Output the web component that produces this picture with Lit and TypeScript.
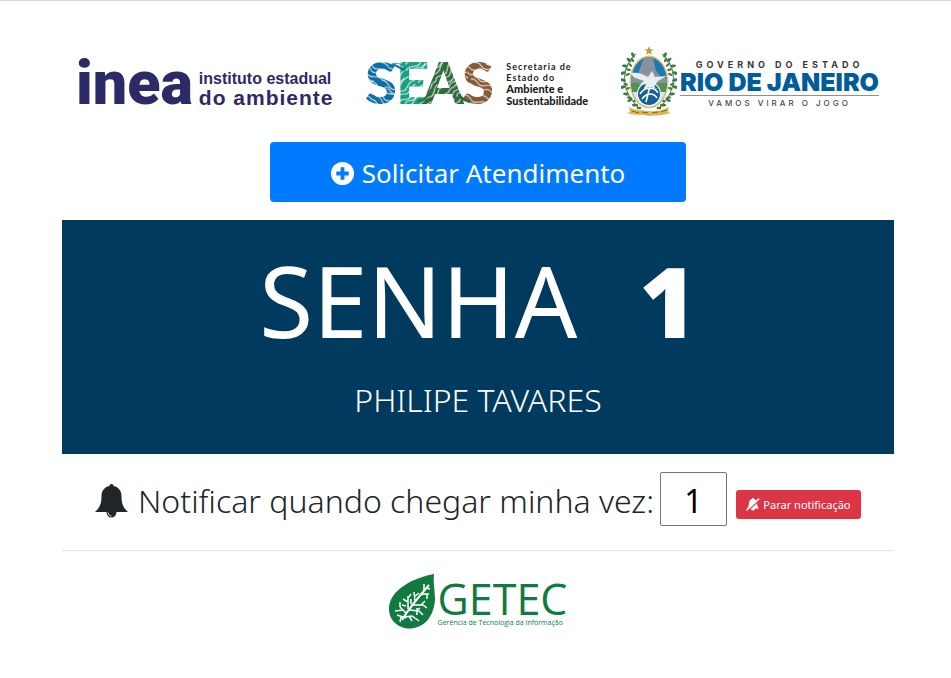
import { LitElement, html, css, svg } from "lit";
import { customElement, property, state } from "lit/decorators.js";

@customElement("inea-logo")
class IneaLogo extends LitElement {
  static styles = css`
    :host { display: flex; align-items: center; color: #2d2a68; }
    .mark { font: 900 61px/72px Roboto, sans-serif; padding-top: 4px; }
    .name { display: flex; flex-direction: column; padding: 16px 0 0 6px; font-family: "Liberation Sans", sans-serif; font-weight: 700; white-space: nowrap; }
    .small { font-size: 16px; line-height: 18px; }
    .big { font-size: 21px; line-height: 20px; letter-spacing: 1px; }
  `;
  render() {
    return html`<span class="mark">inea</span>
      <span class="name"><span class="small">instituto estadual</span><span class="big">do ambiente</span></span>`;
  }
}

@customElement("seas-logo")
class SeasLogo extends LitElement {
  static styles = css`
    :host { display: flex; align-items: center; gap: 12px; color: #1c1c1c; }
    svg { display: block; width: 128px; height: 72px; }
    .letters { font: 900 58px Lato, sans-serif; }
    .name { display: flex; flex-direction: column; padding-top: 6px; font: 700 10px/12px Lato, sans-serif; white-space: nowrap; }
    .light { font-size: 9px; line-height: 11px; letter-spacing: 1px; }
    .strong { font-weight: 900; font-size: 11px; line-height: 12px; }
  `;
  private texture(id: string, color: string, flip: number) {
    return svg`<pattern id=${id} width="26" height="22" patternUnits="userSpaceOnUse" patternTransform="rotate(${flip})">
      <rect width="26" height="22" fill=${color} />
      <g fill="none" stroke="#fff" stroke-width="1">
        <path d="M0 3C7-2 9 8 15 5S22 1 26 3" />
        <path d="M2 7C8 3 10 12 16 9S22 6 25 7" />
        <path d="M0 12C6 9 9 17 15 14S22 10 26 12" />
        <path d="M5 17C10 13 12 21 19 17" />
        <path d="M0 20C5 17 7 23 13 20S22 18 26 20" />
      </g>
    </pattern>`;
  }
  render() {
    return html`<svg viewBox="0 -12 128 72" role="img" aria-label="SEAS">
        <defs>
          ${this.texture("blue", "#0b6ea8", 30)} ${this.texture("teal", "#17a184", -35)}
          ${this.texture("green", "#2f6b3c", -50)} ${this.texture("brown", "#855a36", 20)}
        </defs>
        <g class="letters">
          <text x="-1" y="47" fill="url(#blue)">S</text>
          <text x="30" y="47" fill="url(#teal)">E</text>
          <text x="57" y="47" fill="url(#green)">A</text>
          <text x="96" y="47" fill="url(#brown)">S</text>
        </g>
        <path d="M23 10C29 5 31 11 39 13" fill="none" stroke="#0b6ea8" stroke-width="2" />
        <path d="M24 8C30 4 34 8 38 8" fill="none" stroke="#17a184" stroke-width="1" />
        <path d="M52 44C59 45 61 38 66 32" fill="none" stroke="#2f6b3c" stroke-width="2" />
        <path d="M93 37C96 44 99 42 104 45" fill="none" stroke="#2f6b3c" stroke-width="3" />
      </svg>
      <span class="name">
        <span class="light">Secretaria de</span><span class="light">Estado do</span>
        <span class="strong">Ambiente e</span><span class="strong">Sustentabilidade</span>
      </span>`;
  }
}

@customElement("rio-logo")
class RioLogo extends LitElement {
  static styles = css`
    :host { display: flex; align-items: center; gap: 3px; }
    svg { display: block; width: 56px; height: 70px; }
    .name { display: flex; flex-direction: column; align-items: center; padding-top: 9px; white-space: nowrap; font-family: Inter, sans-serif; }
    .over { font-size: 9px; line-height: 10px; font-weight: 700; letter-spacing: 4px; color: #3b3637; }
    .main { font-size: 25px; line-height: 25px; font-weight: 900; color: #005c9c; border-bottom: 1px solid #8e9196; }
    .under { font-size: 8px; line-height: 15px; font-weight: 500; letter-spacing: 3px; color: #4c4748; }
  `;
  private leaves(side: number) {
    const spots = [[-20, 14, 40], [-24, 20, 10], [-26, 27, -20], [-26, 34, 20], [-26, 41, -20], [-23, 48, 10], [-19, 54, -30], [-14, 59, 0], [-16, 9, 60]];
    return svg`<g transform="translate(28 0) scale(${side} 1)" fill="#417b43">
      <path d="M-13 8C-28 20-29 44-11 61" fill="none" stroke="#417b43" stroke-width="1" />
      ${spots.map(([x, y, a]) => svg`<g transform="translate(${x} ${y}) rotate(${a})"><ellipse rx="3" ry="1.5" /><ellipse cx="4" cy="3" rx="2.5" ry="1.2" /></g>`)}
    </g>`;
  }
  render() {
    return html`<svg viewBox="0 0 56 70" role="img" aria-label="Brasão do Rio de Janeiro">
        <defs><clipPath id="shield"><ellipse cx="28" cy="36" rx="18" ry="25" /></clipPath></defs>
        ${this.leaves(1)} ${this.leaves(-1)}
        <path d="M28 0l1.2 3.3 3.5.1-2.8 2.1 1 3.4-2.9-2-2.9 2 1-3.4-2.8-2.1 3.5-.1z" fill="#c29a43" />
        <ellipse cx="28" cy="36" rx="19.5" ry="26.5" fill="#e0c47c" />
        <g clip-path="url(#shield)">
          <path d="M8 8h40v56H8z" fill="#1c79b2" />
          <path d="M8 34L17 28 22 14 27 9 32 12 35 25 40 31 48 33V39H8z" fill="#86939c" />
          <path d="M8 37h40v11H8z" fill="#4f9653" />
          <path d="M8 46h40v16H8z" fill="#d8e4e9" />
        </g>
        <circle cx="28" cy="48" r="12" fill="#fff" />
        <circle cx="28" cy="48" r="11" fill="#176095" />
        <path d="M19 48C24 40 34 41 37 47M21 53C26 46 33 47 36 52M29 40l-4 16" fill="none" stroke="#fff" stroke-width="1.6" />
        <path d="M10 27C19 26 22 29 27 31L31 25 34 31 46 30 37 35 33 41 37 43 28 41 22 44 25 38 18 39 23 35 12 31z" fill="#e8eef0" />
        <path d="M8 61C14 65 22 64 27 65S41 65 48 61L47 66 50 67C40 70 35 69 28 70 21 68 15 70 6 67L9 66z" fill="#dfb64d" />
        <path d="M11 65l7 2M21 66l6 1M31 67l6-1M40 66l6-2" stroke="#80652a" stroke-width="1" />
      </svg>
      <span class="name"><span class="over">GOVERNO DO ESTADO</span><span class="main">RIO DE JANEIRO</span><span class="under">VAMOS VIRAR O JOGO</span></span>`;
  }
}

@customElement("getec-logo")
class GetecLogo extends LitElement {
  static styles = css`
    :host { display: flex; align-items: center; gap: 3px; color: #117a3f; font-family: "Open Sans", sans-serif; }
    svg { display: block; width: 46px; height: 55px; }
    .name { display: flex; flex-direction: column; padding-top: 2px; white-space: nowrap; }
    .main { font-size: 43px; line-height: 41px; font-weight: 400; }
    .sub { font-size: 7px; line-height: 8px; }
  `;
  render() {
    return html`<svg viewBox="0 0 46 55" role="img" aria-label="Folha">
        <path d="M45 0C27 3 0 15 0 35 0 47 10 55 22 54.500 39 53 45 38 46 26 46 16 44 9 45 0z" fill="#117a3f" />
        <g fill="none" stroke="#fff" stroke-width="1.500">
          <path d="M13 46C19 36 26 27 40 11" stroke-width="2" />
          <path d="M17 39L11 33M14 36L6 37M11 33L11 28M19 35L19 22M19 28L14 25M19 24L22 20M26 27L25 18M26 22L30 19M31 21L35 20L40 20M35 16L35 10M37 14L41 15" />
          <path d="M15 43L23 42L30 47M20 42L23 47M20 36L30 37L34 41M27 37L31 34M24 31L34 31L38 34M32 31L36 27M28 41L28 34M8 41L17 44M12 43L11 48M13 31L17 32M22 30L22 25M38 20L38 25" />
        </g>
      </svg>
      <span class="name"><span class="main">GETEC</span><span class="sub">Gerência de Tecnologia da Informação</span></span>`;
  }
}

@customElement("app-root")
class AppRoot extends LitElement {
  @property() holder = "PHILIPE TAVARES";
  @property({ type: Number }) ticket = 1;
  @state() private notifyAt = "1";

  static styles = css`
    :host { display: block; box-sizing: border-box; min-height: 100vh; border-top: 1px solid #d5d5d5; background: #fff; color: #212529; font-family: "Noto Sans", "Open Sans", sans-serif; }
    main { display: flex; flex-direction: column; padding: 44px 57px 40px 62px; }
    header { display: flex; align-items: center; justify-content: space-between; padding: 0 15px 0 14px; height: 71px; }
    button { font-family: inherit; color: #fff; border: 0; border-radius: 4px; cursor: pointer; display: flex; align-items: center; justify-content: center; }
    svg { display: block; flex: none; }
    .request { align-self: center; width: 50%; height: 60px; margin-top: 26px; padding: 2px 0 0; gap: 8px; background: #007bff; font-size: 26px; line-height: 40px; }
    .plus { width: 23px; height: 23px; }
    .panel { display: flex; flex-direction: column; align-items: center; margin-top: 18px; padding: 18px 0 30px; background: #003a5e; color: #fff; }
    .ticket { display: flex; gap: 62px; margin: 0; font-size: 98px; line-height: 124px; font-weight: 400; }
    .ticket strong { font-weight: 900; }
    .holder { margin: 14px 0 0; font-size: 32px; line-height: 48px; font-weight: 300; }
    .notify { display: flex; align-items: center; justify-content: center; padding: 18px 0 24px; border-bottom: 1px solid #e5e5e5; }
    .notify label { display: flex; align-items: center; gap: 10px; padding-top: 3px; font-size: 32px; line-height: 48px; font-weight: 300; white-space: nowrap; }
    .bell { width: 33px; height: 34px; }
    .notify input { box-sizing: border-box; width: 67px; height: 54px; margin: 0 9px 0 6px; padding: 3px 0 0; border: 1px solid #767676; border-radius: 2px; background: #fff; color: #000; font: 400 32px "Noto Sans", sans-serif; text-align: center; }
    .stop { align-self: flex-end; width: 125px; height: 29px; margin-bottom: 7px; padding: 0; gap: 3px; background: #dc3545; font-size: 11px; white-space: nowrap; border-radius: 3px; }
    .muted { width: 14px; height: 13px; }
    footer { display: flex; justify-content: center; padding-top: 23px; }
  `;

  render() {
    return html`<main>
      <header><inea-logo></inea-logo><seas-logo></seas-logo><rio-logo></rio-logo></header>
      <button class="request" type="button">
        <svg class="plus" viewBox="0 0 24 24" aria-hidden="true"><circle cx="12" cy="12" r="12" fill="#fff" /><path d="M12 5.500v13M5.500 12h13" stroke="#007bff" stroke-width="4" /></svg>
        <span>Solicitar Atendimento</span>
      </button>
      <section class="panel">
        <h1 class="ticket"><span>SENHA</span><strong>${this.ticket}</strong></h1>
        <p class="holder">${this.holder}</p>
      </section>
      <section class="notify">
        <label for="turn">
          <svg class="bell" viewBox="0 0 33 34" aria-hidden="true"><path fill="#212529" d="M16.500 0C17.800 0 18.500.9 18.500 2 24 3 26.500 7.500 26.500 12 26.500 20 28.500 24 33 28H21.500A5 5.500 0 0 1 11.500 28H0C4.500 24 6.500 20 6.500 12 6.500 7.500 9 3 14.500 2 14.500.9 15.200 0 16.500 0z" /><path d="M13.200 28.500C13.200 30.600 14.600 32 16.500 32" fill="none" stroke="#fff" stroke-width=".8" /></svg>
          <span>Notificar quando chegar minha vez:</span>
        </label>
        <input id="turn" type="text" inputmode="numeric" .value=${this.notifyAt} @input=${(e: Event) => (this.notifyAt = (e.target as HTMLInputElement).value)} />
        <button class="stop" type="button">
          <svg class="muted" viewBox="0 0 14 13" aria-hidden="true"><path fill="#fff" d="M7 0C7.600 0 8 .4 8 .9 10 1.300 11 3 11 5 11 8 12 9.500 13.300 10.500H9A2 2 0 0 1 5 10.500H.7C2 9.500 3 8 3 5 3 3 4 1.300 6 .9 6 .4 6.400 0 7 0z" /><path d="M1.500 13L14 1.500" stroke="#dc3545" stroke-width="1.300" /><path d="M.4 12.300L13.200.6" stroke="#fff" stroke-width="1.500" /></svg>
          <span>Parar notificação</span>
        </button>
      </section>
      <footer><getec-logo></getec-logo></footer>
    </main>`;
  }
}
